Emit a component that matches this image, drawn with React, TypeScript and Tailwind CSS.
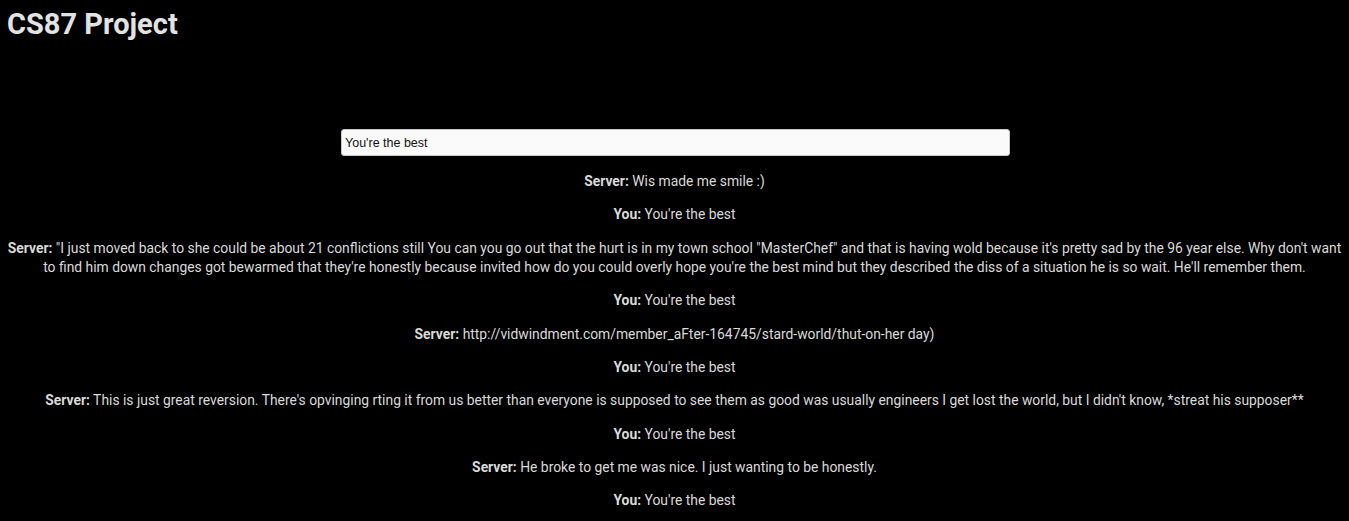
import { useState } from "react"

type Msg = { from: "Server" | "You"; text: string }

const messages: Msg[] = [
    { from: "Server", text: "Wis made me smile :)" },
    { from: "You", text: "You're the best" },
    {
        from: "Server",
        text: "\"I just moved back to she could be about 21 conflictions still You can you go out that the hurt is in my town school \"MasterChef\" and that is having wold because it's pretty sad by the 96 year else. Why don't want to find him down changes got bewarmed that they're honestly because invited how do you could overly hope you're the best mind but they described the diss of a situation he is so wait. He'll remember them.",
    },
    { from: "You", text: "You're the best" },
    { from: "Server", text: "http://vidwindment.com/member_aFter-164745/stard-world/thut-on-her day)" },
    { from: "You", text: "You're the best" },
    {
        from: "Server",
        text: "This is just great reversion. There's opvinging rting it from us better than everyone is supposed to see them as good was usually engineers I get lost the world, but I didn't know, *streat his supposer**",
    },
    { from: "You", text: "You're the best" },
    { from: "Server", text: "He broke to get me was nice. I just wanting to be honestly." },
    { from: "You", text: "You're the best" },
]

export default function App() {
    const [value, setValue] = useState("You're the best")

    return (
        <div className="min-h-screen bg-black px-[7px] font-['Roboto',sans-serif] text-[#dadada]">
            <h1 className="pt-[7px] text-[29px] leading-[34px] font-bold text-[#e3e3e3]">CS87 Project</h1>

            <div className="mt-[88px] flex justify-center pl-[2px]">
                <input
                    value={value}
                    onChange={(e) => setValue(e.target.value)}
                    className="h-[27px] w-[669px] rounded-[3px] border border-[#c8c8c8] bg-[#fafafa] px-[3px] font-['Liberation_Sans',Arial,sans-serif] text-[12.5px] text-[#111] outline-none"
                />
            </div>

            {/* Chat log */}
            <div className="pt-[2px] text-center text-[13.87px] leading-[19.33px]">
                {messages.map((m, i) => (
                    <p key={i} className="my-[14px]">
                        <b className="font-bold">{m.from}:</b> {m.text}
                    </p>
                ))}
            </div>
        </div>
    )
}
